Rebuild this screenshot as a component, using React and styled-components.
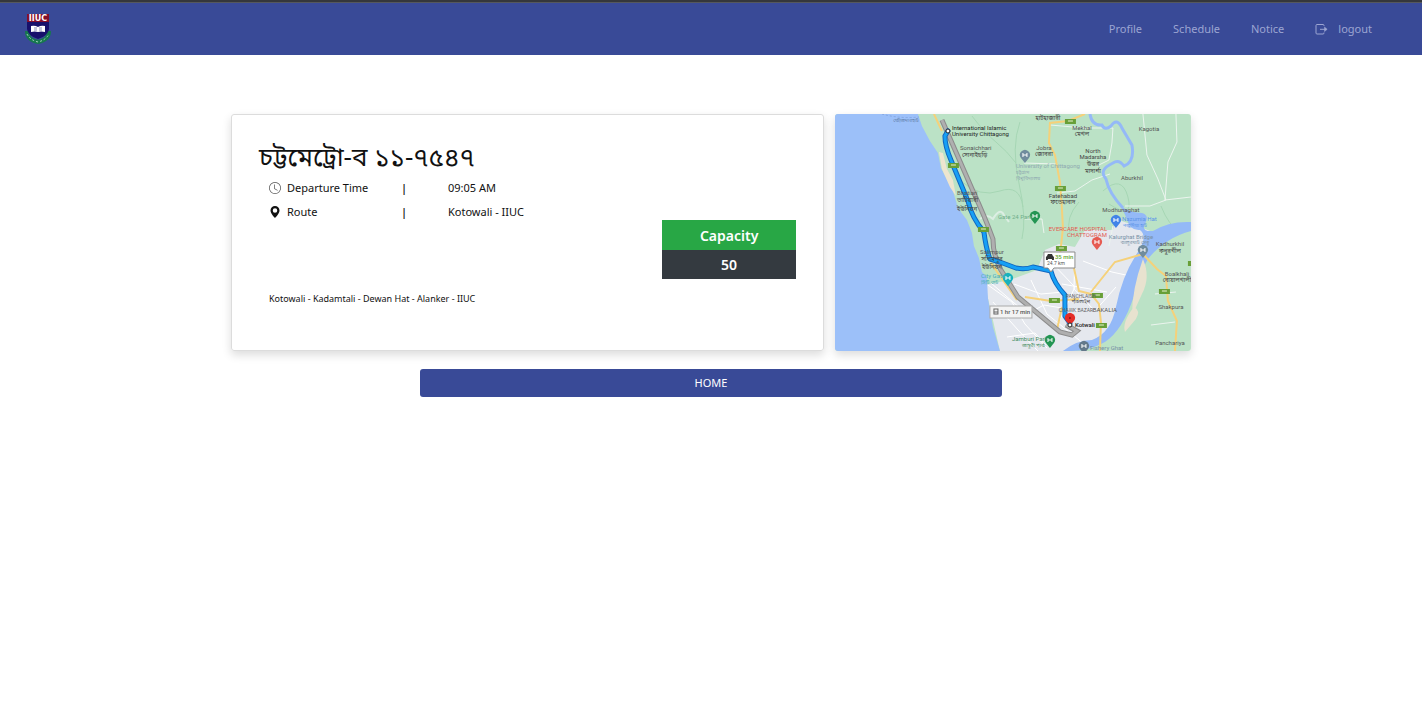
import React from "react";
import styled, { createGlobalStyle } from "styled-components";
import { BsClock, BsGeoAltFill } from "react-icons/bs";

const GlobalStyle = createGlobalStyle`
  * { box-sizing: border-box; }
  body {
    margin: 0;
    background: #fff;
    color: #111;
    font-family: "Noto Sans", "Noto Sans Bengali", sans-serif;
    font-size: 11px;
    line-height: 16px;
  }
`;

const Header = styled.header`
  display: flex;
  align-items: center;
  justify-content: space-between;
  height: 55px;
  padding: 1px 50px 0 25px;
  background: #394a97;
  border-top: 2px solid #35373b;
  box-shadow: inset 0 1px #55585d;
`;

const Brand = styled.a`
  display: flex;
`;

const Nav = styled.nav`
  display: flex;
  gap: 31px;
`;

const NavLink = styled.a`
  display: flex;
  align-items: center;
  gap: 10px;
  color: #9ca5d2;
  text-decoration: none;
`;

const Main = styled.main`
  max-width: 960px;
  margin: 0 auto;
  padding-top: 59px;
`;

const Columns = styled.div`
  display: grid;
  grid-template-columns: 5fr 3fr;
  gap: 11px;
`;

const Card = styled.section`
  display: flex;
  justify-content: space-between;
  min-height: 237px;
  padding: 23px 27px;
  border: 1px solid #dcdcdc;
  border-radius: 3px;
  box-shadow: 0 4px 10px rgba(0, 0, 0, 0.14);
`;

const MapCard = styled(Card)`
  padding: 0;
  border: 0;
  overflow: hidden;
`;

const MapDrawing = styled.svg`
  display: block;
  width: 100%;
  height: 100%;
  font-family: Roboto, "Noto Sans Bengali", sans-serif;
`;

const Title = styled.h1`
  margin: 0 0 6px;
  font-size: 26px;
  font-weight: 400;
  line-height: 36px;
`;

const Details = styled.dl`
  display: grid;
  grid-template-columns: 132px 47px auto;
  row-gap: 8px;
  margin: 0 0 0 10px;
`;

const Term = styled.dt`
  display: flex;
  align-items: center;
  gap: 6px;
`;

const Value = styled.dd`
  margin: 0;
`;

const Divider = styled(Value)`
  font-weight: 600;
`;

const Stops = styled.p`
  margin: 71px 0 0 10px;
  font-size: 9px;
`;

const Capacity = styled.table`
  align-self: flex-start;
  width: 134px;
  margin-top: 82px;
  border-collapse: collapse;
  color: #fff;
  font-size: 14px;
  font-weight: 600;
  line-height: 20px;
  text-align: center;
`;

const CapacityLabel = styled.th`
  height: 30px;
  padding: 1px 0 0;
  background: #28a745;
  font-weight: 600;
`;

const CapacityValue = styled.td`
  height: 29px;
  padding: 1px 0 0;
  background: #343a40;
`;

const HomeButton = styled.button`
  display: block;
  width: 100%;
  max-width: 582px;
  height: 28px;
  margin: 18px auto 0;
  border: 0;
  border-radius: 3px;
  background: #394a97;
  color: #fff;
  font: inherit;
`;

function Logo() {
  return (
    <svg width="26" height="30" viewBox="0 0 26 30" role="img" aria-label="IIUC">
      <path d="M2 17Q2 26 13 28Q24 26 24 17" fill="none" stroke="#16784e" strokeWidth="4" />
      <path d="M2 20Q5 26 13 28Q21 26 24 20" fill="none" stroke="#a9d0c0" strokeWidth="1" strokeDasharray="2 2" />
      <path d="M2 0H24V15Q23 22 13 25Q3 22 2 15Z" fill="#17106b" />
      <path d="M2 0H24V8H2Z" fill="#850f2a" />
      <text x="13" y="7" fill="#fff" fontSize="8" fontWeight="700" textAnchor="middle" fontFamily="DejaVu Sans, sans-serif">IIUC</text>
      <path d="M6 12Q10 11 13 13Q16 11 20 12V18Q16 17 13 18Q10 17 6 18Z" fill="#fff" />
      <path d="M9 14H12M14 14H17M9 16H12M14 16H17" stroke="#8d8fb9" />
    </svg>
  );
}

function LogoutIcon() {
  return (
    <svg width="13" height="13" viewBox="0 0 13 13" fill="none" stroke="currentColor" aria-hidden="true">
      <path d="M9 3V2.5Q9 1.5 8 1.5H2Q1 1.5 1 2.5V10Q1 11 2 11H8Q9 11 9 10V9.5" />
      <path d="M5 6.3H10" />
      <path d="M9.5 4L12.2 6.3L9.5 8.6Z" fill="currentColor" strokeWidth="0.5" />
    </svg>
  );
}

const places = [
  [71, 8, "ফৌজদারহাট", 5, "#5f7ea8", 400, "middle"],
  [117, 16, "International Islamic", 6, "#222", 400, "start"],
  [117, 22, "University Chittagong", 6, "#222", 400, "start"],
  [125, 36, "Sonaichhari", 6, "#555", 400, "start"],
  [127, 43, "সোনাইছড়ি", 6, "#444", 400, "start"],
  [122, 81, "Bhatiari", 6, "#555", 400, "start"],
  [122, 88, "ভাটিয়ারী", 6, "#444", 400, "start"],
  [122, 97, "ইউনিয়ন", 6, "#444", 400, "start"],
  [163, 105, "Gate 24 Park", 6, "#6fae8a", 400, "start"],
  [213, 6, "হাটহাজারী", 6, "#444", 400, "middle"],
  [247, 16, "Mekhal", 6, "#555", 400, "middle"],
  [247, 22, "মেখল", 6, "#444", 400, "middle"],
  [314, 17, "Kagotia", 6, "#555", 400, "middle"],
  [209, 36, "Jobra", 6, "#555", 400, "middle"],
  [209, 42, "জোবরা", 6, "#444", 400, "middle"],
  [258, 39, "North", 6, "#444", 400, "middle"],
  [258, 45, "Madarsha", 6, "#444", 400, "middle"],
  [258, 52, "উত্তর", 6, "#444", 400, "middle"],
  [258, 59, "মাদার্শা", 6, "#444", 400, "middle"],
  [181, 54, "University of Chittagong", 6, "#8fa9b0", 400, "start"],
  [181, 60, "চট্টগ্রাম", 5, "#8fa9b0", 400, "start"],
  [181, 66, "বিশ্ববিদ্যালয়", 5, "#8fa9b0", 400, "start"],
  [297, 66, "Aburkhil", 6, "#555", 400, "middle"],
  [228, 84, "Fatehabad", 6, "#444", 400, "middle"],
  [228, 90, "ফতেহাবাদ", 6, "#444", 400, "middle"],
  [286, 98, "Modhunaghat", 6, "#555", 400, "middle"],
  [287, 107, "Nazumia Hat", 6, "#5c94e8", 400, "start"],
  [288, 113, "নজুমিয়া হাট", 5, "#5c94e8", 400, "start"],
  [243, 117, "EVERCARE HOSPITAL", 6, "#e25b51", 400, "middle"],
  [252, 123, "CHATTOGRAM", 6, "#e25b51", 400, "middle"],
  [296, 125, "Kalurghat Bridge", 6, "#7890a5", 400, "middle"],
  [300, 130, "কালুরঘাট সেতু", 5, "#7890a5", 400, "middle"],
  [335, 132, "Kadhurkhil", 6, "#555", 400, "middle"],
  [335, 139, "কধুরখীল", 6, "#444", 400, "middle"],
  [342, 162, "Boalkhali", 6, "#555", 400, "middle"],
  [342, 168, "বোয়ালখালী", 6, "#444", 400, "middle"],
  [336, 195, "Shakpura", 6, "#555", 400, "middle"],
  [335, 231, "Panchariya", 6, "#555", 400, "middle"],
  [157, 140, "Salimpur", 6, "#555", 400, "middle"],
  [157, 147, "সলিমপুর", 6, "#444", 400, "middle"],
  [157, 155, "ইউনিয়ন", 6, "#444", 400, "middle"],
  [146, 164, "City Gate", 6, "#49aebb", 400, "start"],
  [146, 170, "সিটি গেট", 5, "#49aebb", 400, "start"],
  [246, 184, "PANCHLAISH", 5, "#666", 400, "middle"],
  [246, 189, "পাঁচলাইশ", 5, "#444", 400, "middle"],
  [241, 198, "CHAWK BAZAR", 5, "#666", 400, "middle"],
  [270, 198, "BAKALIA", 6, "#555", 400, "middle"],
  [240, 213, "Kotwali", 6, "#222", 500, "start"],
  [177, 227, "Jamburi Park", 6, "#438d61", 400, "start"],
  [187, 233, "জাম্বুরী পার্ক", 5, "#438d61", 400, "start"],
  [255, 236, "Fishery Ghat", 6, "#7890a5", 400, "start"],
];

const shields = [
  [118, 51], [148, 115], [235, 7], [225, 74], [226, 134],
  [262, 181], [219, 186], [266, 211], [329, 177], [358, 149],
];

const pins = [
  [190, 42, "#708c9d"], [200, 103, "#239553"], [281, 107, "#4184e8"],
  [262, 129, "#e65b52"], [308, 137, "#708c9d"], [173, 165, "#18b1bd"],
  [215, 227, "#239553"], [249, 233, "#63788a"],
];

const bypass = "M107 6L138 77Q150 103 158 125Q158 141 166 156L183 183L225 218L237 221L242 217L231 211";
const route = "M113 17L110 22Q110 32 116 46L123 63L133 87Q137 104 149 118Q151 134 155 145L165 148L181 154Q190 156 198 153L216 157Q219 169 230 181V202L235 209";

function RouteMap() {
  return (
    <MapDrawing viewBox="0 0 356 237" preserveAspectRatio="xMidYMid slice" role="img" aria-label="Route map from International Islamic University Chittagong to Kotwali">
      <rect width="356" height="237" fill="#bbe2c6" />
      <path d="M150 171L175 166L202 156L210 136L224 130L240 133L250 116L278 116L281 105L310 115L318 118L302 142L291 180L276 216L250 231L230 237H165Z" fill="#e5e8ee" />
      <path d="M0 0H83L87 12L95 27L103 39L106 54L118 77L123 94L132 106L137 119L139 132L144 144L147 158L152 163L153 184L158 213L165 237H0Z" fill="#9cc0f9" />
      <path d="M47 0Q65 5 84 3" fill="none" stroke="#82a5e0" strokeDasharray="2 2" />
      <path d="M104 38L108 39L112 55L118 66L121 82L115 73L107 55Z" fill="#eee5cf" />
      <g fill="none" stroke="#a6d6b4" strokeWidth="1">
        <path d="M137 2Q150 19 161 28T181 49M126 67Q145 84 165 77T188 93M185 8Q176 33 184 69T187 125M268 77Q287 60 293 83T274 90M244 88Q230 104 235 119M326 92Q334 112 345 118" />
      </g>
      <path d="M145 105Q152 99 158 105Q165 93 169 101L174 108" fill="none" stroke="#dceee3" strokeWidth="2" />
      <g fill="none" stroke="#ebf4ee" strokeWidth="1">
        <path d="M215 11L250 14L278 14L277 29L274 46L262 52M189 49L222 50M222 79L240 77L257 66L275 60M308 0L312 41L323 65L331 86M341 0L342 28L333 48L330 86L356 83M331 86L315 92L290 92M190 105L207 105L209 119M274 132L278 112M320 180L341 178M316 211L340 208" />
      </g>
      <g fill="none" stroke="#fff" strokeWidth="1">
        <path d="M153 171L177 188L190 210L212 234M158 188L184 217L203 237M156 169L192 200L209 191L245 197M172 223L200 219L211 231M179 170L206 180L229 178M240 143L239 175L260 197L281 173M248 147L277 158L300 163M217 149L240 173L224 208M227 170L272 178M196 166L212 200L249 230" />
      </g>
      <path d="M255 0Q257 12 267 11Q270 17 276 12Q282 3 287 14L297 31Q300 48 289 52Q284 45 278 49Q263 56 271 65Q274 79 288 94" fill="none" stroke="#94b9f7" strokeWidth="3" />
      <path d="M286 92Q293 98 307 99Q315 101 310 110Q306 118 318 117Q334 107 356 108V117Q330 124 313 145Q305 158 299 182Q288 216 270 228Q254 237 236 237H228Q242 226 257 226Q276 219 281 193Q287 163 301 141Q314 123 305 116Q295 117 292 105Z" fill="#94b9f7" />
      <path d="M308 145Q316 163 307 180L297 202Q297 175 308 145M299 193Q306 196 301 205L290 218Q287 208 299 193Z" fill="#e8e2cf" />
      <g fill="none" stroke="#f5d17a" strokeWidth="2">
        <path d="M99 0L107 17M250 0L233 7L215 9L214 29L220 41L225 68L227 95L228 114L225 142L239 154L244 177L256 180L264 190L266 208L265 237M156 149L182 186M190 183L216 187L244 185M256 178L280 148L308 140L322 155L331 162L333 187L342 207L340 237M227 193L222 216" />
      </g>
      <path d={bypass} fill="none" stroke="#8c8c8c" strokeWidth="5" />
      <path d={bypass} fill="none" stroke="#afafaf" strokeWidth="3" />
      <g fill="none" strokeLinejoin="round" strokeLinecap="round">
        <path d={route} stroke="#1267bf" strokeWidth="5" />
        <path d={route} stroke="#16a0f5" strokeWidth="3" />
      </g>
      {shields.map(([x, y]) => (
        <g key={x}>
          <rect x={x - 5} y={y - 2} width="11" height="5" fill="#689f38" />
          <path d={`M${x - 2} ${y}H${x + 3}`} stroke="#e7f1cc" />
        </g>
      ))}
      {pins.map(([x, y, color]) => (
        <g key={x}>
          <path d={`M${x} ${y + 7}L${x - 4} ${y + 2}A5 5 0 1 1 ${x + 4} ${y + 2}Z`} fill={color} />
          <path d={`M${x - 2} ${y - 3}V${y + 1}M${x + 2} ${y - 3}V${y + 1}M${x - 2} ${y - 1}H${x + 2}`} stroke="#fff" />
        </g>
      ))}
      {places.map(([x, y, label, size, color, weight, anchor]) => (
        <text key={`${x}-${y}`} x={x} y={y} fontSize={size} fill={color} fontWeight={weight} textAnchor={anchor}>{label}</text>
      ))}
      <circle cx="113" cy="17" r="2" fill="#fff" stroke="#222" />
      <path d="M235 211L231 207A5 5 0 1 1 239 207Z" fill="#e52d27" />
      <circle cx="235" cy="204" r="1" fill="#8c1612" />
      <circle cx="235" cy="211" r="2" fill="#fff" stroke="#222" />
      <path d="M209 138H240V154H219L216 158L213 154H209Z" fill="#fff" stroke="#8b8b8b" />
      <path d="M212 142L213 140H217L218 142L219 143V146H217V145H213V146H211V143Z" fill="#333" />
      <text x="220" y="145" fontSize="6" fontWeight="500" fill="#65a62f">35 min</text>
      <text x="212" y="151" fontSize="5" fill="#555">24.7 km</text>
      <rect x="155" y="192" width="42" height="12" fill="#f3f3f3" stroke="#aaa" />
      <rect x="159" y="195" width="4" height="5" fill="none" stroke="#666" />
      <path d="M159 198H163" stroke="#666" />
      <text x="165" y="200" fontSize="6" fontWeight="500" fill="#555">1 hr 17 min</text>
    </MapDrawing>
  );
}

export default function App() {
  return (
    <>
      <GlobalStyle />
      <Header>
        <Brand href="#"><Logo /></Brand>
        <Nav>
          <NavLink href="#profile">Profile</NavLink>
          <NavLink href="#schedule">Schedule</NavLink>
          <NavLink href="#notice">Notice</NavLink>
          <NavLink href="#logout"><LogoutIcon />logout</NavLink>
        </Nav>
      </Header>
      <Main>
        <Columns>
          <Card>
            <div>
              <Title lang="bn">চট্টমেট্রো-ব ১১-৭৫৪৭</Title>
              <Details>
                <Term><BsClock size={12} color="#555" />Departure Time</Term>
                <Divider aria-hidden="true">|</Divider>
                <Value>09:05 AM</Value>
                <Term><BsGeoAltFill size={12} />Route</Term>
                <Divider aria-hidden="true">|</Divider>
                <Value>Kotowali - IIUC</Value>
              </Details>
              <Stops>Kotowali - Kadamtali - Dewan Hat - Alanker - IIUC</Stops>
            </div>
            <Capacity>
              <thead><tr><CapacityLabel scope="col">Capacity</CapacityLabel></tr></thead>
              <tbody><tr><CapacityValue>50</CapacityValue></tr></tbody>
            </Capacity>
          </Card>
          <MapCard><RouteMap /></MapCard>
        </Columns>
        <HomeButton type="button">HOME</HomeButton>
      </Main>
    </>
  );
}
